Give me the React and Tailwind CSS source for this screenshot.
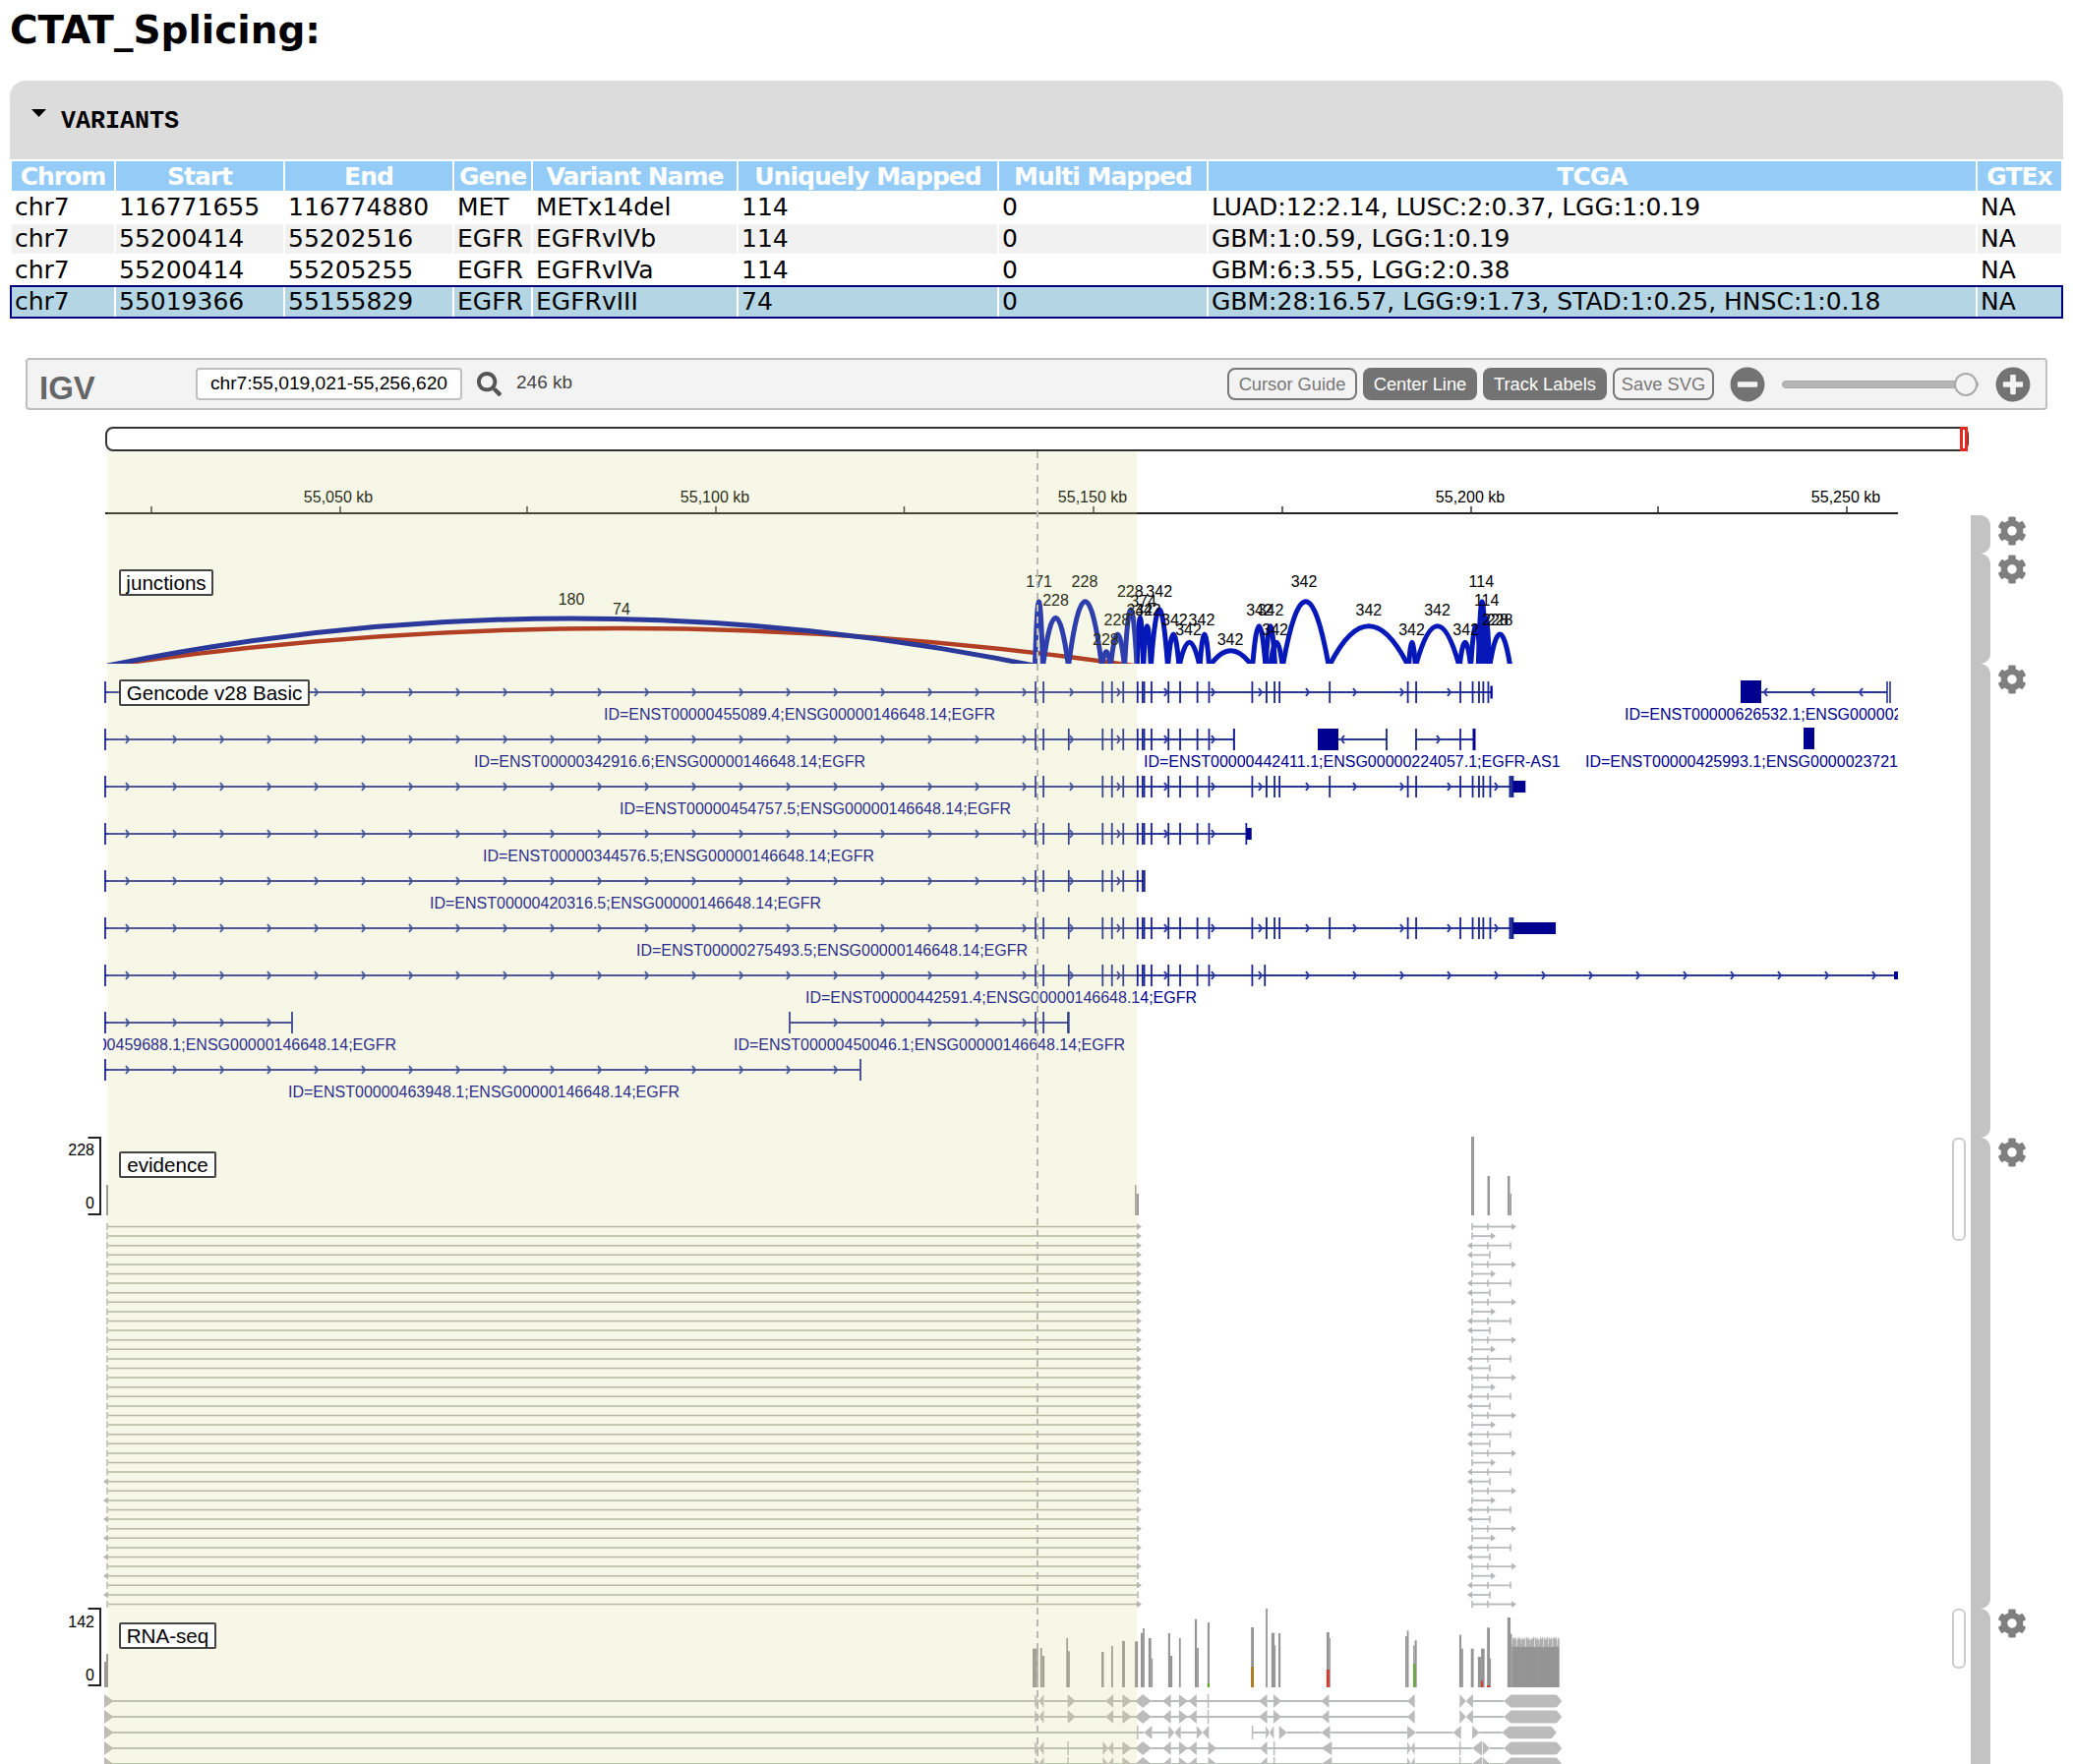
// App.jsx
import React from 'react';
import { FaCog, FaSearch, FaMinusCircle, FaPlusCircle } from 'react-icons/fa';

const columns = [
  ['Chrom', 'w-[104px]'],
  ['Start', 'w-[170px]'],
  ['End', 'w-[170px]'],
  ['Gene', 'w-[78px]'],
  ['Variant Name', 'w-[207px]'],
  ['Uniquely Mapped', 'w-[263px]'],
  ['Multi Mapped', 'w-[211px]'],
  ['TCGA', 'w-[780px]'],
  ['GTEx', 'w-[85px]'],
];

const rows = [
  ['chr7', '116771655', '116774880', 'MET', 'METx14del', '114', '0', 'LUAD:12:2.14, LUSC:2:0.37, LGG:1:0.19', 'NA'],
  ['chr7', '55200414', '55202516', 'EGFR', 'EGFRvIVb', '114', '0', 'GBM:1:0.59, LGG:1:0.19', 'NA'],
  ['chr7', '55200414', '55205255', 'EGFR', 'EGFRvIVa', '114', '0', 'GBM:6:3.55, LGG:2:0.38', 'NA'],
  ['chr7', '55019366', '55155829', 'EGFR', 'EGFRvIII', '74', '0', 'GBM:28:16.57, LGG:9:1.73, STAD:1:0.25, HNSC:1:0.18', 'NA'],
];

// zoomed-in reference coordinates -> page coordinates
const ax = (z) => 1000 + z / 2.613;
const ay = (z) => 340 + z / 3;
const gx = (z) => 1030 + z / 2.958;
const cx = (z) => 1040 + z / 2.8;
const cy = (z) => 1630 + z / 3;

const arcs = [
  [137, 158, 815], [158, 226, 865], [226, 315, 815], [315, 338, 968], [338, 375, 915], [375, 408, 840],
  [408, 425, 865], [425, 445, 890], [445, 490, 840], [490, 520, 915], [520, 575, 940], [575, 600, 915],
  [600, 715, 965], [715, 750, 890], [750, 775, 890], [762, 795, 940], [795, 918, 815], [918, 1130, 890],
  [1130, 1148, 940], [1148, 1265, 890], [1265, 1295, 940], [1295, 1322, 890], [1315, 1335, 815],
  [1325, 1345, 865], [1345, 1400, 915],
];

const arcLabels = [
  ['171', 148, 755], ['228', 192, 812], ['228', 269, 755], ['228', 325, 933], ['228', 355, 873], ['228', 390, 785],
  ['342', 467, 785], ['374', 425, 815], ['342', 415, 843], ['342', 437, 843], ['342', 508, 873], ['342', 580, 873],
  ['342', 545, 903], ['342', 656, 933], ['342', 733, 843], ['342', 763, 843], ['342', 775, 903], ['342', 852, 755],
  ['342', 1024, 843], ['342', 1206, 843], ['342', 1138, 903], ['342', 1282, 903], ['114', 1323, 755], ['114', 1337, 812],
  ['228', 1360, 873], ['228', 1372, 873],
];

const head = [68, 92];
const mid = [270, 298, 332, 375, 390, 395, 417, 468, 503, 555, 590];
const tail = [720, 763, 787, 802, 953, 1188, 1213, 1346, 1383, 1402, 1415, 1436];

const genes = [
  { y: 704, from: 107, to: gx(1440), exons: [...head, ...mid, ...tail.slice(0, 11), 1430], endBox: [gx(1436), gx(1443), 6.5] },
  { y: 752, from: 107, to: gx(665), exons: [...head, 168, ...mid, 665], tickEnd: true },
  { y: 800, from: 107, to: gx(1498), exons: [...head, ...mid, ...tail, 1495, 1500, 1504], box: [gx(1505), gx(1542), 6] },
  { y: 848, from: 107, to: gx(702), exons: [...head, 168, ...mid, 702], box: [gx(702), gx(718), 6] },
  { y: 896, from: 107, to: gx(395), exons: [...head, 168, ...mid.slice(0, 6)], tickEnd: true },
  { y: 944, from: 107, to: gx(1498), exons: [...head, 168, ...mid, ...tail, 1495, 1500, 1504], box: [gx(1505), 1582, 6] },
  { y: 992, from: 107, to: 1928, exons: [...head, 168, ...mid, 720, 758], box: [1926, 1930, 4] },
  { y: 1040, from: 107, to: 297, exons: [], tickEnd: true },
  { y: 1040, from: 803, to: 1086, exons: [68, 92, 168], tickEnd: true },
  { y: 1088, from: 107, to: 875, exons: [], tickEnd: true },
];

const geneLabels = [
  ['ID=ENST00000455089.4;ENSG00000146648.14;EGFR', 614, 732],
  ['ID=ENST00000626532.1;ENSG00000236512.1;EGFR', 1652, 732],
  ['ID=ENST00000342916.6;ENSG00000146648.14;EGFR', 482, 780],
  ['ID=ENST00000442411.1;ENSG00000224057.1;EGFR-AS1', 1163, 780],
  ['ID=ENST00000425993.1;ENSG00000237215.1;EGFR', 1612, 780],
  ['ID=ENST00000454757.5;ENSG00000146648.14;EGFR', 630, 828],
  ['ID=ENST00000344576.5;ENSG00000146648.14;EGFR', 491, 876],
  ['ID=ENST00000420316.5;ENSG00000146648.14;EGFR', 437, 924],
  ['ID=ENST00000275493.5;ENSG00000146648.14;EGFR', 647, 972],
  ['ID=ENST00000442591.4;ENSG00000146648.14;EGFR', 819, 1020],
  ['ID=ENST00000459688.1;ENSG00000146648.14;EGFR', 5, 1068],
  ['ID=ENST00000450046.1;ENSG00000146648.14;EGFR', 746, 1068],
  ['ID=ENST00000463948.1;ENSG00000146648.14;EGFR', 293, 1116],
];

// [z1, z2, top] in coverage zoom coordinates
const coverage = [
  [28, 44, 140], [50, 55, 138], [55, 62, 162], [124, 129, 108], [129, 134, 148], [224, 231, 150], [252, 257, 132],
  [283, 291, 117], [319, 328, 118], [336, 342, 92], [342, 347, 78], [358, 366, 108], [366, 370, 170], [414, 420, 93],
  [420, 426, 162], [445, 450, 108], [490, 496, 50], [496, 501, 138], [526, 532, 60], [650, 658, 75], [692, 697, 18],
  [708, 717, 92], [717, 720, 130], [728, 734, 93], [865, 873, 90], [873, 876, 108], [1089, 1094, 102], [1094, 1099, 85],
  [1112, 1116, 130], [1116, 1122, 115], [1243, 1249, 98], [1249, 1254, 140], [1276, 1284, 140], [1296, 1305, 165],
  [1305, 1315, 140], [1322, 1330, 76], [1330, 1333, 170], [1380, 1389, 45], [1389, 1393, 95],
];

const mismatches = [
  [526, 532, 246, 'fill-[#5aa820]'], [650, 658, 195, 'fill-[#b07a20]'], [865, 873, 204, 'fill-[#d8392a]'],
  [1112, 1118, 186, 'fill-[#62ad2c]'], [1305, 1310, 238, 'fill-[#d8392a]'], [1322, 1330, 252, 'fill-[#d8392a]'],
];

const denseBars = Array.from({ length: 74 }, (_, i) => ({
  x: cx(1393) + i * 0.65,
  top: 104 + ((i * 37) % 11) + (i % 7 === 0 ? 22 : 0),
}));

const readA = {
  lines: [[-2604, 1116], [1282, 1370]],
  ticks: [528],
  tris: [[34, 46], [60, 46], [128, 150], [258, 236], [284, 310], [342, 320], [342, 366], [422, 398], [445, 470], [495, 472], [696, 672], [714, 736], [872, 850], [1116, 1095], [1244, 1262], [1282, 1262]],
  block: [1370, 1535],
};
const readC = {
  lines: [[-2604, 325], [327, 345], [368, 415], [450, 495], [654, 692], [752, 850], [875, 1095], [1120, 1225], [1300, 1365]],
  ticks: [327, 654],
  tris: [[368, 345], [415, 432], [450, 432], [495, 512], [530, 512], [692, 703], [715, 703], [730, 752], [875, 850], [1095, 1120], [1248, 1225], [1280, 1300]],
  block: [1365, 1520],
};
const readD = {
  lines: [[-2604, 1280], [1330, 1370]],
  ticks: [129, 716, 1245, 1306],
  tris: [[34, 46], [60, 46], [228, 243], [258, 243], [284, 310], [342, 320], [342, 366], [422, 398], [445, 470], [495, 472], [528, 552], [696, 675], [880, 850], [1095, 1105], [1116, 1105], [1305, 1280], [1310, 1330]],
  block: [1370, 1535],
};
const reads = [[1730, readA], [1746, readA], [1762, readC], [1778, readD], [1794, readD]];

const evidence = Array.from({ length: 41 }, (_, i) => i);

function blockPoints(z1, z2, y) {
  const x1 = cx(z1);
  const x2 = cx(z2);
  const top = [];
  const bottom = [];
  for (let x = x1 + 7; x < x2 - 5; x += 3) {
    const bump = 5 + ((x * 7) % 3) * 0.8;
    top.push(`${x},${y - bump}`);
    bottom.unshift(`${x},${y + bump}`);
  }
  return `${x1},${y} ${top.join(' ')} ${x2 - 5},${y - 6} ${x2},${y} ${x2 - 5},${y + 6} ${bottom.join(' ')}`;
}

function TrackLabel({ top, width, children }) {
  return (
    <div className={`absolute left-[121px] ${top} ${width} border-2 border-[#444] rounded-[2px] bg-white text-[20.6px] leading-[23px] text-black text-center whitespace-nowrap`}>
      {children}
    </div>
  );
}

function Tracks() {
  return (
    <svg viewBox="0 459 1985 1335" className="block w-[1985px] h-[1335px] shrink-0 text-black">
      <defs>
        <clipPath id="arc-clip"><rect x="109" y="560" width="1500" height="115" /></clipPath>
        <clipPath id="gene-clip"><rect x="105" y="680" width="1825" height="450" /></clipPath>
      </defs>

      {/* ruler */}
      <line x1="107" x2="1930" y1="522" y2="522" className="stroke-[#222] stroke-2" />
      {[154, 346, 536, 728, 919.5, 1112, 1304, 1496, 1686, 1878].map((x) => (
        <line key={x} x1={x} x2={x} y1="515" y2="522" className="stroke-[#333] stroke-[1.5]" />
      ))}
      {[[344, '55,050 kb'], [727, '55,100 kb'], [1111, '55,150 kb'], [1495, '55,200 kb'], [1877, '55,250 kb']].map(([x, t]) => (
        <text key={t} x={x} y="511" textAnchor="middle" className="text-[16px] fill-black">{t}</text>
      ))}

      {/* junctions */}
      <g clipPath="url(#arc-clip)" fill="none">
        <path d="M109 677 Q 630 601 1153 677" className="stroke-[#a81a0c] stroke-[4.5]" />
        <path d="M109 677 Q 581 581 1052 677" className="stroke-[#0012a0] stroke-[5]" />
        {arcs.map(([a, b, p]) => {
          const peak = ay(p);
          return (
            <path
              key={`${a}-${b}`}
              d={`M${ax(a)} 678 Q ${(ax(a) + ax(b)) / 2} ${2 * peak - 678} ${ax(b)} 678`}
              className="stroke-[#0618b8] stroke-[5]"
            />
          );
        })}
      </g>
      <text x="581" y="615" textAnchor="middle" className="text-[16px] fill-black">180</text>
      <text x="632" y="625" textAnchor="middle" className="text-[16px] fill-black">74</text>
      {arcLabels.map(([t, x, y]) => (
        <text key={`${t}-${x}-${y}`} x={ax(x)} y={ay(y) + 5} textAnchor="middle" className="text-[16px] fill-black">{t}</text>
      ))}

      {/* gene models */}
      <g clipPath="url(#gene-clip)">
        {genes.map((g) => (
          <g key={`${g.y}-${g.from}`}>
            <line x1={g.from} x2={g.to} y1={g.y} y2={g.y} className="stroke-[#2a379c] stroke-2" />
            <line x1={g.from} x2={g.from} y1={g.y - 11} y2={g.y + 11} className="stroke-[#18248f] stroke-[1.8]" />
            {g.tickEnd && <line x1={g.to} x2={g.to} y1={g.y - 11} y2={g.y + 11} className="stroke-[#18248f] stroke-[1.8]" />}
            {Array.from({ length: 40 }, (_, i) => 129 + i * 48)
              .filter((x) => x > g.from + 8 && x < g.to - 6)
              .map((x) => (
                <path key={x} d={`M${x - 1} ${g.y - 4} L${x + 2} ${g.y} L${x - 1} ${g.y + 4}`} fill="none" className="stroke-[#2a379c] stroke-2" />
              ))}
            {g.exons.map((z, i) => (
              <line key={`${z}-${i}`} x1={gx(z)} x2={gx(z)} y1={g.y - 11} y2={g.y + 11} className="stroke-[#18248f] stroke-[1.8]" />
            ))}
            {g.box && <rect x={g.box[0]} y={g.y - g.box[2]} width={g.box[1] - g.box[0]} height={g.box[2] * 2} className="fill-[#000090]" />}
            {g.endBox && <rect x={g.endBox[0]} y={g.y - g.endBox[2]} width={g.endBox[1] - g.endBox[0]} height={g.endBox[2] * 2} className="fill-[#000090]" />}
          </g>
        ))}

        {/* EGFR-AS1 and the two genes at the far right */}
        <rect x="1340" y="741" width="21" height="22" className="fill-[#000090]" />
        <line x1="1361" x2="1410" y1="752" y2="752" className="stroke-[#2a379c] stroke-2" />
        <path d="M1367 748 L1364 752 L1367 756" fill="none" className="stroke-[#2a379c] stroke-2" />
        <line x1="1410" x2="1410" y1="741" y2="763" className="stroke-[#18248f] stroke-[1.8]" />
        <line x1="1440" x2="1499" y1="752" y2="752" className="stroke-[#2a379c] stroke-2" />
        <path d="M1461 748 L1464 752 L1461 756" fill="none" className="stroke-[#2a379c] stroke-2" />
        <line x1="1440" x2="1440" y1="741" y2="763" className="stroke-[#18248f] stroke-[1.8]" />
        <line x1="1485" x2="1485" y1="741" y2="763" className="stroke-[#18248f] stroke-[1.8]" />
        <line x1="1499" x2="1499" y1="741" y2="763" className="stroke-[#000090] stroke-[3]" />
        <rect x="1770" y="692" width="21" height="23" className="fill-[#000090]" />
        <line x1="1791" x2="1919" y1="704" y2="704" className="stroke-[#2a379c] stroke-2" />
        {[1795, 1843, 1892].map((x) => (
          <path key={x} d={`M${x + 2} ${700} L${x - 1} 704 L${x + 2} 708`} fill="none" className="stroke-[#2a379c] stroke-2" />
        ))}
        <line x1="1919" x2="1919" y1="693" y2="715" className="stroke-[#18248f] stroke-[1.5]" />
        <line x1="1922" x2="1922" y1="693" y2="715" className="stroke-[#18248f] stroke-[1.5]" />
        <rect x="1834" y="740" width="11" height="22" className="fill-[#000090]" />
        {geneLabels.map(([t, x, y]) => (
          <text key={t} x={x} y={y} className="text-[16px] fill-[#000090]">{t}</text>
        ))}
      </g>

      {/* evidence */}
      <path d="M89.5 1157 H102 V1235 H89.5" fill="none" className="stroke-[#222] stroke-2" />
      <text x="96" y="1175" textAnchor="end" className="text-[16px] fill-black">228</text>
      <text x="96" y="1229" textAnchor="end" className="text-[16px] fill-black">0</text>
      <rect x="108" y="1205" width="2" height="31" className="fill-[#999]" />
      <rect x="1154" y="1205" width="1.5" height="31" className="fill-[#999]" />
      <rect x="1155.5" y="1214" width="2.5" height="22" className="fill-[#999]" />
      <rect x="1496" y="1156" width="3" height="80" className="fill-[#999]" />
      <rect x="1512.5" y="1196" width="2.5" height="40" className="fill-[#999]" />
      <rect x="1533" y="1196" width="2.5" height="40" className="fill-[#999]" />
      <rect x="1535.5" y="1214" width="1.5" height="22" className="fill-[#999]" />
      {evidence.map((i) => {
        const y = 1247.5 + i * 9.6;
        const kind = i % 4;
        const rightEnd = kind === 0 ? 1537 : kind === 1 ? 1516 : kind === 2 ? 1536 : 1515;
        const leftArrow = i >= 27 && i % 2 === 1;
        const rightTick = i >= 27 && i % 2 === 1;
        return (
          <g key={i}>
            <line x1="110" x2="1156" y1={y} y2={y} className="stroke-[#adb5a6] stroke-[1.5]" />
            {leftArrow ? (
              <polygon points={`105,${y} 110,${y - 3.5} 110,${y + 3.5}`} className="fill-[#b5b5b5]" />
            ) : (
              <line x1="109" x2="109" y1={y - 3.5} y2={y + 3.5} className="stroke-[#b5b5b5] stroke-[1.5]" />
            )}
            {rightTick ? (
              <line x1="1157" x2="1157" y1={y - 3.5} y2={y + 3.5} className="stroke-[#b5b5b5] stroke-[1.5]" />
            ) : (
              <polygon points={`1156,${y - 3.5} 1161,${y} 1156,${y + 3.5}`} className="fill-[#b5b5b5]" />
            )}
            <line x1={kind < 2 ? 1497 : 1495} x2={rightEnd} y1={y} y2={y} className="stroke-[#b4bcbd] stroke-[1.8]" />
            {kind < 2 ? (
              <>
                <line x1="1497" x2="1497" y1={y - 3.5} y2={y + 3.5} className="stroke-[#b5b5b5] stroke-[1.5]" />
                <polygon points={`${rightEnd},${y - 3.5} ${rightEnd + 5},${y} ${rightEnd},${y + 3.5}`} className="fill-[#b5b5b5]" />
              </>
            ) : (
              <>
                <line x1={rightEnd} x2={rightEnd} y1={y - 3.5} y2={y + 3.5} className="stroke-[#b5b5b5] stroke-[1.5]" />
                <polygon points={`1497,${y - 3.5} 1492,${y} 1497,${y + 3.5}`} className="fill-[#b5b5b5]" />
              </>
            )}
            {kind % 2 === 0 && (
              <line x1="1513" x2="1513" y1={y - 3.5} y2={y + 3.5} className="stroke-[#b5b5b5] stroke-[1.5]" />
            )}
          </g>
        );
      })}

      {/* RNA-seq */}
      <path d="M89.5 1636 H102 V1714 H89.5" fill="none" className="stroke-[#222] stroke-2" />
      <text x="96" y="1655" textAnchor="end" className="text-[16px] fill-black">142</text>
      <text x="96" y="1709" textAnchor="end" className="text-[16px] fill-black">0</text>
      <rect x="106" y="1690" width="2" height="26" className="fill-[#999]" />
      <rect x="108" y="1682" width="2" height="34" className="fill-[#999]" />
      {coverage.map(([a, b, t]) => (
        <rect key={a} x={cx(a)} y={cy(t)} width={(b - a) / 2.8} height={cy(258) - cy(t)} className="fill-[#959595]" />
      ))}
      <rect x={cx(1393)} y={cy(135)} width={cx(1527) - cx(1393)} height={cy(258) - cy(135)} className="fill-[#959595]" />
      {denseBars.map((b, i) => (
        <rect key={i} x={b.x} y={cy(b.top)} width="0.65" height={cy(258) - cy(b.top)} className="fill-[#959595]" />
      ))}
      {mismatches.map(([a, b, t, c]) => (
        <rect key={a} x={cx(a)} y={cy(t)} width={(b - a) / 2.8} height={cy(258) - cy(t)} className={c} />
      ))}
      {reads.map(([y, r], n) => (
        <g key={n}>
          {r.lines.map(([a, b]) => (
            <line key={a} x1={cx(a)} x2={cx(b)} y1={y} y2={y} className="stroke-[#b9bebb] stroke-2" />
          ))}
          <polygon points={`106,${y - 7} 115.5,${y} 106,${y + 7}`} className="fill-[#bbb]" />
          {r.ticks.map((z) => (
            <line key={z} x1={cx(z)} x2={cx(z)} y1={y - 7} y2={y + 7} className="stroke-[#bbb] stroke-[1.5]" />
          ))}
          {r.tris.map(([base, tip], i) => (
            <polygon key={i} points={`${cx(base)},${y - 7} ${cx(tip)},${y} ${cx(base)},${y + 7}`} className="fill-[#bbb]" />
          ))}
          <polygon points={blockPoints(r.block[0], r.block[1], y)} className="fill-[#bbb]" />
        </g>
      ))}

      {/* region of interest + center line, laid over the tracks */}
      <rect x="109.5" y="459" width="1046.5" height="1335" className="fill-[#d2d782]/20" />
      <line x1="1055" x2="1055" y1="459" y2="1794" strokeDasharray="7 5" className="stroke-[#b9b9b0] stroke-2" />
    </svg>
  );
}

function SideRow({ height, thumb, last, gearTop = 'pt-px' }) {
  return (
    <div className={`flex ${height}`}>
      <div className="w-[19px] shrink-0">
        {thumb && <div className={`w-[14px] ${thumb} border-2 border-[#ccc] rounded-[6px] bg-white`} />}
      </div>
      <div className={`w-[20px] shrink-0 bg-[#c3c3c3] ${last ? 'rounded-tr-[10px]' : 'rounded-r-[10px]'}`} />
      <div className={`pl-[7px] ${gearTop}`}>
        <FaCog className="w-[30px] h-[30px] text-[#7f7f7f]" />
      </div>
    </div>
  );
}

export default function App() {
  return (
    <div className="relative w-[2108px] h-[1794px] overflow-hidden bg-white font-['Liberation_Sans',sans-serif]">
      <div className="px-[10px]">
        <h1 className="h-[82px] pt-[6px] text-[39px] leading-[50px] font-bold text-black font-['DejaVu_Sans',sans-serif]">
          CTAT_Splicing:
        </h1>

        <div className="flex items-center h-[80px] pl-[22px] gap-[15px] bg-[#dcdcdc] rounded-t-[16px] text-black">
          <svg viewBox="0 0 15 8" className="w-[15px] h-[8px] -mt-[14px]">
            <polygon points="0,0 15,0 7.5,8" fill="black" />
          </svg>
          <span className="mt-[3px] text-[25px] font-bold font-['Liberation_Mono',monospace]">VARIANTS</span>
        </div>

        <table className="table-fixed border-separate border-spacing-[2px] w-[2088px] text-[25px] leading-[30px] text-black font-['DejaVu_Sans',sans-serif]">
          <thead>
            <tr>
              {columns.map(([name, w]) => (
                <th key={name} className={`${w} h-[30px] p-0 pt-[2px] leading-[28px] tracking-[-1px] bg-[#94ccf7] text-white font-bold text-center whitespace-nowrap overflow-hidden`}>{name}</th>
              ))}
            </tr>
          </thead>
          <tbody>
            {rows.map((row, i) => (
              <tr key={i} className={i === 3 ? 'outline-2 outline-[#000080]' : ''}>
                {row.map((cell, j) => (
                  <td
                    key={j}
                    className={`h-[30px] p-0 pl-[3px] whitespace-nowrap ${i === 3 ? 'bg-[#b4d5e3]' : i === 1 ? 'bg-[#f1f1f1]' : 'bg-white'}`}
                  >
                    {cell}
                  </td>
                ))}
              </tr>
            ))}
          </tbody>
        </table>
      </div>

      {/* IGV toolbar */}
      <div className="flex items-center ml-[26px] mt-[40px] w-[2056px] h-[53px] border-2 border-[#bfbfbf] rounded-[4px] bg-[#f3f3f3] pr-[15px]">
        <div className="ml-[12px] w-[159px] shrink-0 text-[33px] font-bold text-[#666] leading-none mt-[8px]">IGV</div>
        <div className="flex items-center justify-center w-[271px] h-[33px] border-2 border-[#bfbfbf] rounded-[4px] bg-white text-[19.2px] text-black">
          chr7:55,019,021-55,256,620
        </div>
        <FaSearch className="ml-[15px] w-[25px] h-[25px] text-[#555]" />
        <span className="ml-[15px] text-[19px] text-[#444] -mt-[2px]">246 kb</span>

        <div className="ml-auto flex items-center gap-[6px] text-[18.3px]">
          <button className="w-[132px] h-[33px] border-2 border-[#777] rounded-[8px] text-[#777]">Cursor Guide</button>
          <button className="w-[116px] h-[33px] rounded-[8px] bg-[#737373] text-white">Center Line</button>
          <button className="w-[126px] h-[33px] rounded-[8px] bg-[#737373] text-white">Track Labels</button>
          <button className="w-[103px] h-[33px] border-2 border-[#777] rounded-[8px] text-[#777]">Save SVG</button>
        </div>
        <FaMinusCircle className="ml-[16px] w-[36px] h-[36px] text-[#737373]" />
        <div className="relative ml-[17px] w-[200px] h-[8px] rounded-full bg-[#b5b5b5] border border-[#a8a8a8]">
          <div className="absolute right-0 -top-[9px] w-[24px] h-[24px] rounded-full border-2 border-[#aaa] bg-[#f4f4f4]" />
        </div>
        <FaPlusCircle className="ml-[17px] w-[36px] h-[36px] text-[#737373]" />
      </div>

      {/* ideogram */}
      <div className="relative ml-[107px] mt-[17px] w-[1895px] h-[25px] border-2 border-[#333] rounded-[8px] bg-white">
        <div className="absolute -right-px -top-[2px] w-[8px] h-[25px] border-[3px] border-[#e8281e]" />
      </div>

      <div className="relative flex h-[1335px]">
        <Tracks />
        <TrackLabel top="top-[120px]" width="w-[96px]">junctions</TrackLabel>
        <TrackLabel top="top-[232px]" width="w-[194px]">Gencode v28 Basic</TrackLabel>
        <TrackLabel top="top-[712px]" width="w-[99px]">evidence</TrackLabel>
        <TrackLabel top="top-[1191px]" width="w-[99px]">RNA-seq</TrackLabel>

        <div className="flex flex-col pt-[65px]">
          <SideRow height="h-[39px]" />
          <SideRow height="h-[112px]" />
          <SideRow height="h-[482px]" />
          <SideRow height="h-[479px]" thumb="h-[105px]" gearTop="pt-0" />
          <SideRow height="h-[158px]" thumb="h-[61px]" gearTop="pt-0" last />
        </div>
      </div>
    </div>
  );
}
